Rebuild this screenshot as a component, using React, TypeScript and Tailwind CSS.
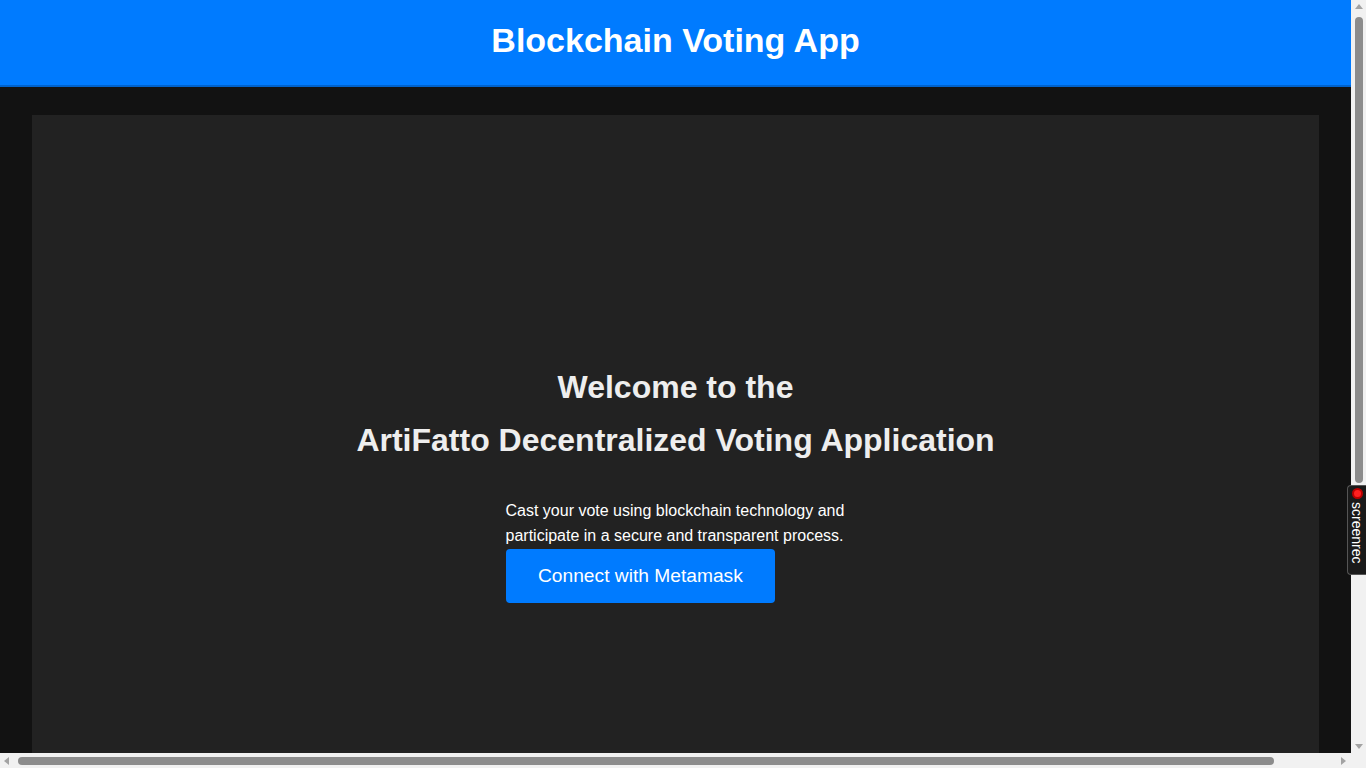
import React from 'react';

// browser scrollbars + screen recorder badge, as they appear in the capture
const Scrollbars: React.FC = () => (
  <>
    <div className="fixed right-0 top-0 flex h-[753px] w-[15px] flex-col items-center bg-[#f1f1f1]">
      <span className="mt-[4px] h-0 w-0 border-x-[4px] border-b-[5px] border-x-transparent border-b-[#a3a3a3]" />
      <span className="mt-[8px] h-[466px] w-[8px] rounded-full bg-[#8c8c8c]" />
      <span className="mt-auto mb-[4px] h-0 w-0 border-x-[4px] border-t-[5px] border-x-transparent border-t-[#a3a3a3]" />
    </div>
    <div className="fixed bottom-0 left-0 flex h-[15px] w-full items-center bg-[#f1f1f1]">
      <span className="ml-[4px] h-0 w-0 border-y-[4px] border-r-[5px] border-y-transparent border-r-[#a3a3a3]" />
      <span className="ml-[9px] h-[8px] w-[1256px] rounded-full bg-[#8c8c8c]" />
      <span className="ml-auto mr-[20px] h-0 w-0 border-y-[4px] border-l-[5px] border-y-transparent border-l-[#a3a3a3]" />
    </div>
    <div className="fixed right-0 top-[485px] flex h-[90px] w-[19px] flex-col items-center rounded-l-[4px] border border-r-0 border-[#555] bg-[#1a1a1a] pt-[2px]">
      <span className="mb-[3px] h-[11px] w-[11px] rounded-full border-2 border-[#b00] bg-[#ff2020]" />
      <span className="text-[14px] leading-[16px] text-white [writing-mode:vertical-rl]">screenrec</span>
    </div>
  </>
);

const App: React.FC = () => {
  return (
    <div className="min-h-screen bg-[#121212] font-['Liberation_Sans',Arial,sans-serif] text-[#f0f0f0]">
      <div className="mr-[15px]">
        <header className="flex h-[87px] items-center justify-center border-b-2 border-[#0062cc] bg-[#007bff] pb-[5px]">
          <h1 className="text-[34px] font-bold text-white">Blockchain Voting App</h1>
        </header>

        <main className="px-8 pt-7 pb-8">
          <section className="flex min-h-[1050px] flex-col items-center bg-[#222222] pt-[246px]">
            <h2 className="text-center text-[32px] font-bold leading-[53px] text-[#eeeeee]">
              Welcome to the
              <br />
              ArtiFatto Decentralized Voting Application
            </h2>

            <div className="mt-[31px] w-[340px]">
              <p className="text-[16px] leading-[25px] text-white">
                Cast your vote using blockchain technology and participate in a secure and transparent process.
              </p>
              <button className="mt-[1px] h-[54px] rounded bg-[#007bff] px-[32.5px] text-[19.2px] text-white">
                Connect with Metamask
              </button>
            </div>
          </section>
        </main>
      </div>

      <Scrollbars />
    </div>
  );
};

export default App;
